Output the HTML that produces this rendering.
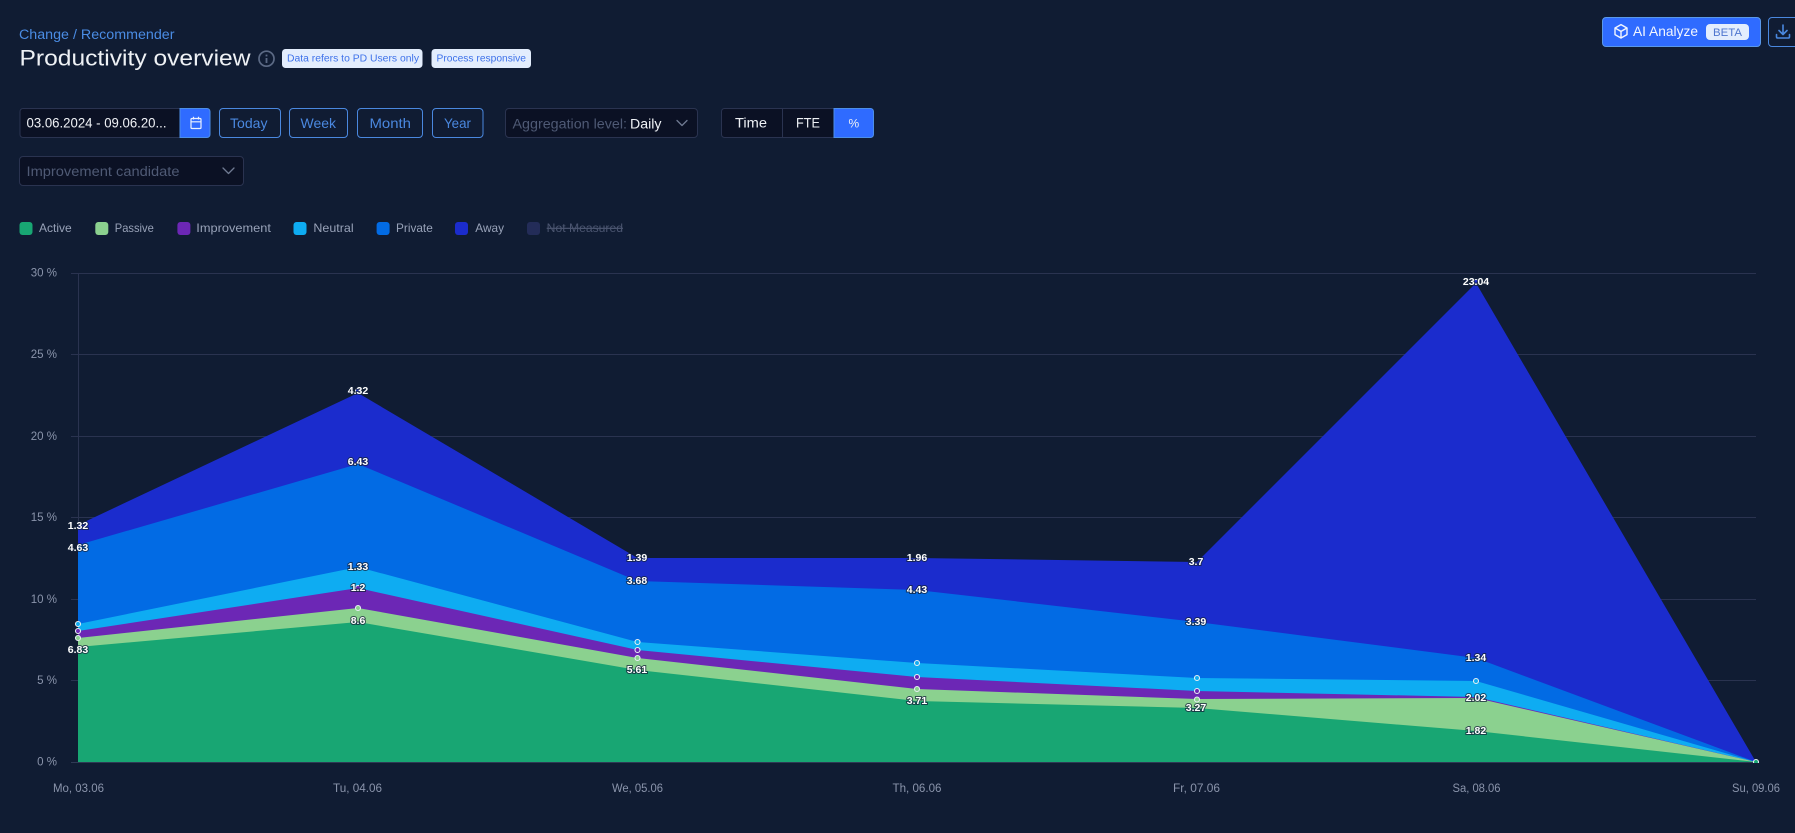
<!DOCTYPE html>
<html lang="en">
<head>
<meta charset="utf-8">
<title>Productivity overview</title>
<style>
html,body{margin:0;padding:0;background:#101c33;width:1795px;height:833px;overflow:hidden}
svg{display:block;position:absolute;left:0;top:0}
text{font-family:"Liberation Sans",sans-serif}
.lb{font-size:10.5px;font-weight:700;fill:#fff;stroke:#14223a;stroke-width:2px;paint-order:stroke;stroke-opacity:.75;text-anchor:middle;dominant-baseline:central}
.ax{font-size:11.5px;fill:#8a94ab}
.lg{font-size:12px;fill:#98a2b8}
.btn{font-size:14px;fill:#4a88df}
.grid{stroke:#2a3350;stroke-width:1}
.m{stroke:#e6eef2;stroke-width:1.1}
</style>
</head>
<body>
<svg width="1795" height="833" viewBox="0 0 1795 833" xmlns="http://www.w3.org/2000/svg">
<rect width="1795" height="833" fill="#101c33"/>

<!-- Header -->
<text x="19" y="39" font-size="13.5" fill="#4a8ce4" textLength="155.5" lengthAdjust="spacingAndGlyphs">Change / Recommender</text>
<text x="19.5" y="65.5" font-size="22" fill="#eef1f5" textLength="231" lengthAdjust="spacingAndGlyphs">Productivity overview</text>
<circle cx="266.5" cy="58.7" r="7.5" fill="none" stroke="#5c6a85" stroke-width="1.7"/>
<rect x="265.6" y="58" width="1.8" height="5" fill="#5c6a85"/><rect x="265.6" y="54.6" width="1.8" height="1.8" fill="#5c6a85"/>
<rect x="282" y="49" width="140.5" height="19" rx="3.5" fill="#e3edfd"/>
<text x="287" y="61.3" font-size="10" fill="#3f72ea" textLength="132" lengthAdjust="spacingAndGlyphs">Data refers to PD Users only</text>
<rect x="431.5" y="49" width="99.5" height="19" rx="3.5" fill="#e3edfd"/>
<text x="436.5" y="61.3" font-size="10" fill="#3f72ea" textLength="89.5" lengthAdjust="spacingAndGlyphs">Process responsive</text>

<!-- AI Analyze -->
<rect x="1602.5" y="17.5" width="158" height="29" rx="3.5" fill="#2f6bff" stroke="#5a98ea"/>
<g fill="none" stroke="#f2f6ff" stroke-width="1.4" stroke-linejoin="round">
<path d="M1621 24.6l6 3.4v6.6l-6 3.4-6-3.4V28z"/><path d="M1615 28l6 3.4 6-3.4M1621 31.4V38"/>
</g>
<text x="1633" y="36" font-size="14" fill="#f2f6ff" textLength="65" lengthAdjust="spacingAndGlyphs">AI Analyze</text>
<rect x="1706" y="24" width="43" height="16" rx="4" fill="#e3edfd"/>
<text x="1713" y="36" font-size="11" fill="#4f76cf" textLength="29" lengthAdjust="spacingAndGlyphs">BETA</text>
<rect x="1768.5" y="17.5" width="40" height="29" rx="3.5" fill="none" stroke="#4a88df"/>
<path d="M1783 25v9M1779 30.5l4 4 4-4M1776.5 34.5v2.2q0 1.3 1.3 1.3h10.4q1.3 0 1.3-1.3v-2.2" fill="none" stroke="#4a88df" stroke-width="1.6" stroke-linecap="round" stroke-linejoin="round"/>

<!-- Date range -->
<path d="M180.5 108.500H23a3 3 0 0 0-3 3v23a3 3 0 0 0 3 3h157.500z" fill="#0b1124" stroke="#2a3350"/>
<text x="26.500" y="127.500" font-size="13.500" fill="#f0f2f6" textLength="140" lengthAdjust="spacingAndGlyphs">03.06.2024 - 09.06.20...</text>
<path d="M180 108.500h27a3 3 0 0 1 3 3v23a3 3 0 0 1-3 3h-27z" fill="#2f6bff" stroke="#4d8fe8"/>
<g fill="none" stroke="#eaf1ff" stroke-width="1.2">
<rect x="191" y="118.500" width="10" height="10" rx="1"/><path d="M191 121.800h10M193.500 116.800v2.700M198.500 116.800v2.700"/>
</g>

<!-- Period buttons -->
<rect x="219.500" y="108.500" width="61" height="29" rx="3.500" fill="none" stroke="#4a88df"/>
<text class="btn" x="230" y="128" textLength="37.500" lengthAdjust="spacingAndGlyphs">Today</text>
<rect x="289.500" y="108.500" width="58" height="29" rx="3.500" fill="none" stroke="#4a88df"/>
<text class="btn" x="300.500" y="128" textLength="35.500" lengthAdjust="spacingAndGlyphs">Week</text>
<rect x="357.500" y="108.500" width="65" height="29" rx="3.500" fill="none" stroke="#4a88df"/>
<text class="btn" x="369.500" y="128" textLength="41.500" lengthAdjust="spacingAndGlyphs">Month</text>
<rect x="432.500" y="108.500" width="50.500" height="29" rx="3.500" fill="none" stroke="#4a88df"/>
<text class="btn" x="444" y="128" textLength="27" lengthAdjust="spacingAndGlyphs">Year</text>

<!-- Aggregation -->
<rect x="505.500" y="108.500" width="192" height="29" rx="3.500" fill="#0b1124" stroke="#2a3350"/>
<text x="512.500" y="128.300" font-size="13.500" fill="#4f5a75" textLength="114.500" lengthAdjust="spacingAndGlyphs">Aggregation level:</text>
<text x="630" y="128.300" font-size="13.500" fill="#eef1f5" textLength="31.500" lengthAdjust="spacingAndGlyphs">Daily</text>
<path d="M677 120.500l5 5 5-5" fill="none" stroke="#6f7a92" stroke-width="1.300" stroke-linecap="round" stroke-linejoin="round"/>

<!-- Time / FTE / % -->
<path d="M834 108.500H724.500a3 3 0 0 0-3 3v23a3 3 0 0 0 3 3H834z" fill="#0b1124" stroke="#2a3350"/>
<line x1="782.500" y1="108.500" x2="782.500" y2="137.500" stroke="#2a3350"/>
<path d="M834 108.500h36.500a3 3 0 0 1 3 3v23a3 3 0 0 1-3 3H834z" fill="#2f6bff" stroke="#4d8fe8"/>
<text x="735" y="127.500" font-size="13.500" fill="#eef1f5" textLength="32" lengthAdjust="spacingAndGlyphs">Time</text>
<text x="796" y="127.500" font-size="13.500" fill="#eef1f5" textLength="24" lengthAdjust="spacingAndGlyphs">FTE</text>
<text x="848.500" y="127.500" font-size="12" fill="#eef1f5">%</text>

<!-- Candidate select -->
<rect x="19.500" y="156.500" width="224" height="29" rx="3.500" fill="#0b1124" stroke="#2a3350"/>
<text x="26.500" y="176" font-size="13.500" fill="#4f5a75" textLength="153" lengthAdjust="spacingAndGlyphs">Improvement candidate</text>
<path d="M223 168l5.500 5.500 5.500-5.500" fill="none" stroke="#6f7a92" stroke-width="1.300" stroke-linecap="round" stroke-linejoin="round"/>

<!-- Legend -->
<rect x="19.500" y="222" width="13" height="13" rx="3" fill="#18a673"/><text class="lg" x="39" y="232" textLength="32.700" lengthAdjust="spacingAndGlyphs">Active</text>
<rect x="95.300" y="222" width="13" height="13" rx="3" fill="#8bd18f"/><text class="lg" x="114.800" y="232" textLength="39" lengthAdjust="spacingAndGlyphs">Passive</text>
<rect x="177.400" y="222" width="13" height="13" rx="3" fill="#6c27b5"/><text class="lg" x="196.300" y="232" textLength="74.600" lengthAdjust="spacingAndGlyphs">Improvement</text>
<rect x="293.500" y="222" width="13" height="13" rx="3" fill="#0eacf2"/><text class="lg" x="313.400" y="232" textLength="40.200" lengthAdjust="spacingAndGlyphs">Neutral</text>
<rect x="376.600" y="222" width="13" height="13" rx="3" fill="#026be4"/><text class="lg" x="396" y="232" textLength="36.800" lengthAdjust="spacingAndGlyphs">Private</text>
<rect x="455" y="222" width="13" height="13" rx="3" fill="#1b2ccd"/><text class="lg" x="475.300" y="232" textLength="28.700" lengthAdjust="spacingAndGlyphs">Away</text>
<rect x="527" y="222" width="13" height="13" rx="3" fill="#232c58"/><text x="546.700" y="232" font-size="12" fill="#4b5570" text-decoration="line-through" textLength="76.300" lengthAdjust="spacingAndGlyphs">Not Measured</text>

<!-- Grid -->
<g class="grid">
<line x1="71" y1="273.500" x2="1756" y2="273.500"/>
<line x1="71" y1="354.500" x2="1756" y2="354.500"/>
<line x1="71" y1="436.500" x2="1756" y2="436.500"/>
<line x1="71" y1="517.500" x2="1756" y2="517.500"/>
<line x1="71" y1="599.500" x2="1756" y2="599.500"/>
<line x1="71" y1="680.500" x2="1756" y2="680.500"/>
<line x1="78.500" y1="273" x2="78.500" y2="762"/>
</g>

<!-- Y axis labels -->
<g class="ax" text-anchor="end">
<text x="57" y="276.500">30 %</text>
<text x="57" y="358">25 %</text>
<text x="57" y="440">20 %</text>
<text x="57" y="521">15 %</text>
<text x="57" y="603">10 %</text>
<text x="57" y="684">5 %</text>
<text x="57" y="765.500">0 %</text>
</g>

<!-- Areas -->
<polygon fill="#1b2ccd" points="78,525 358,393 637.500,558 917,558 1197,562 1476,283 1756,762 78,762"/>
<polygon fill="#026be4" points="78,545 358,464 637.500,581 917,590 1197,622 1476,658 1756,762 78,762"/>
<polygon fill="#0eacf2" points="78,624 358,567 637.500,642 917,663 1197,678 1476,681 1756,762 78,762"/>
<polygon fill="#6c27b5" points="78,631 358,588 637.500,650 917,677 1197,691 1476,697 1756,762 78,762"/>
<polygon fill="#8bd18f" points="78,638 358,608 637.500,658 917,689 1197,699 1476,698 1756,762 78,762"/>
<polygon fill="#18a673" points="78,647 358,622 637.500,670 917,701 1197,708 1476,731 1756,762 78,762"/>
<line x1="71" y1="762.500" x2="1756" y2="762.500" stroke="#2f3a55"/>

<!-- Markers -->
<g class="m">
<g fill="#1b2ccd"><circle cx="358" cy="391" r="2.500"/><circle cx="1476" cy="282" r="2.500"/></g>
<g fill="#0eacf2"><circle cx="78" cy="624" r="2.500"/><circle cx="637.500" cy="642" r="2.500"/><circle cx="917" cy="663" r="2.500"/><circle cx="1197" cy="678" r="2.500"/><circle cx="1476" cy="681" r="2.500"/></g>
<g fill="#6c27b5"><circle cx="78" cy="631" r="2.500"/><circle cx="358" cy="588" r="2.500"/><circle cx="637.500" cy="650" r="2.500"/><circle cx="917" cy="677" r="2.500"/><circle cx="1197" cy="691" r="2.500"/></g>
<g fill="#8bd18f"><circle cx="78" cy="638" r="2.500"/><circle cx="358" cy="608" r="2.500"/><circle cx="637.500" cy="658" r="2.500"/><circle cx="917" cy="689" r="2.500"/><circle cx="1197" cy="699.500" r="2.500"/></g>
<circle cx="1756" cy="762" r="2.500" fill="#18a673"/>
</g>
<rect x="1750" y="763" width="12" height="5" fill="#101c33"/>

<!-- Data labels -->
<g>
<text class="lb" x="78" y="526">1.32</text><text class="lb" x="78" y="548">4.63</text><text class="lb" x="78" y="650">6.83</text>
<text class="lb" x="358" y="391">4.32</text><text class="lb" x="358" y="462">6.43</text><text class="lb" x="358" y="567">1.33</text><text class="lb" x="358" y="588">1.2</text><text class="lb" x="358" y="621">8.6</text>
<text class="lb" x="637" y="558">1.39</text><text class="lb" x="637" y="581">3.68</text><text class="lb" x="637" y="670">5.61</text>
<text class="lb" x="917" y="558">1.96</text><text class="lb" x="917" y="590">4.43</text><text class="lb" x="917" y="701">3.71</text>
<text class="lb" x="1196" y="562">3.7</text><text class="lb" x="1196" y="622">3.39</text><text class="lb" x="1196" y="708">3.27</text>
<text class="lb" x="1476" y="282">23.04</text><text class="lb" x="1476" y="658">1.34</text><text class="lb" x="1476" y="698">2.02</text><text class="lb" x="1476" y="731">1.82</text>
</g>

<!-- X axis labels -->
<g class="ax">
<text x="53" y="792" textLength="51" lengthAdjust="spacingAndGlyphs">Mo, 03.06</text>
<text x="333" y="792" textLength="49" lengthAdjust="spacingAndGlyphs">Tu, 04.06</text>
<text x="612" y="792" textLength="51" lengthAdjust="spacingAndGlyphs">We, 05.06</text>
<text x="892.500" y="792" textLength="49" lengthAdjust="spacingAndGlyphs">Th, 06.06</text>
<text x="1173" y="792" textLength="47" lengthAdjust="spacingAndGlyphs">Fr, 07.06</text>
<text x="1452.500" y="792" textLength="48" lengthAdjust="spacingAndGlyphs">Sa, 08.06</text>
<text x="1732" y="792" textLength="48" lengthAdjust="spacingAndGlyphs">Su, 09.06</text>
</g>
</svg>
</body>
</html>
